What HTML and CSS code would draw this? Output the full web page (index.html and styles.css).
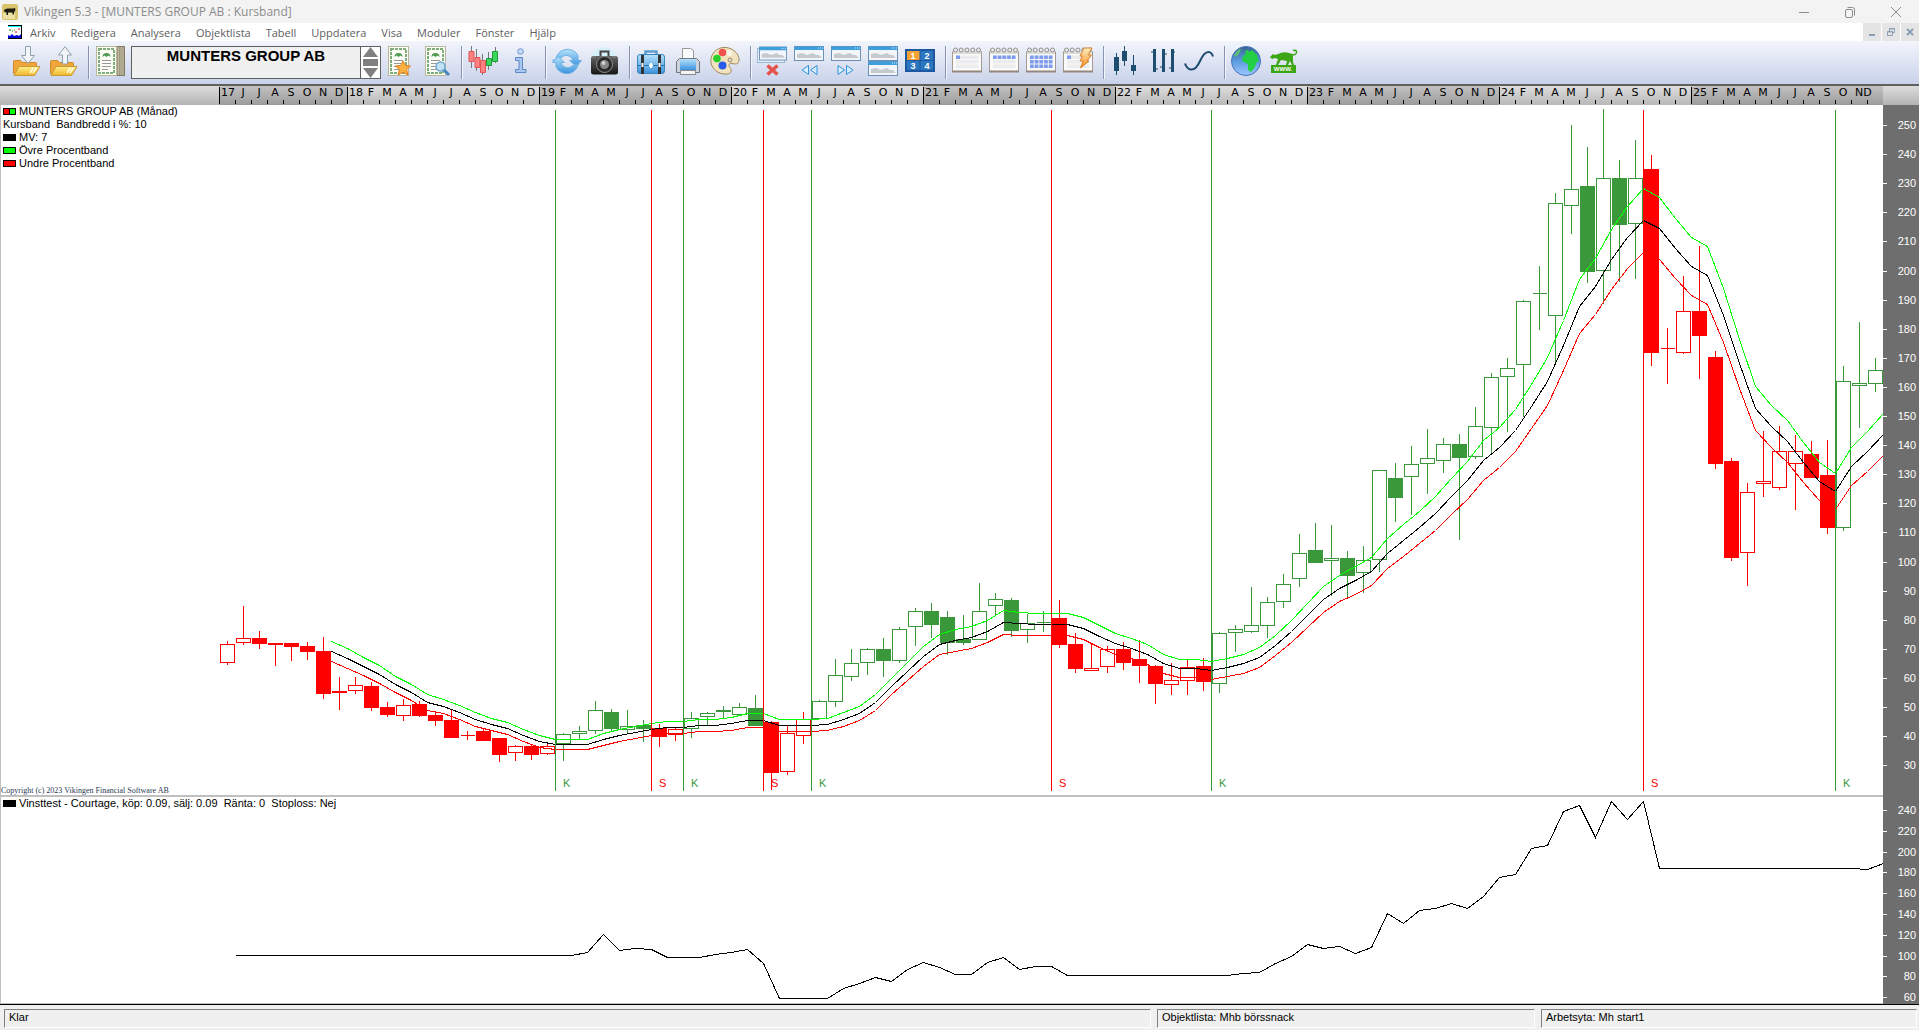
FILE: index.html
```
<!DOCTYPE html>
<html lang="sv">
<head>
    <meta charset="UTF-8">
    <meta name="viewport" content="width=device-width, initial-scale=1.0">
    <title>Vikingen 5.3 - [MUNTERS GROUP AB : Kursband]</title>
    <link rel="stylesheet" href="styles.css">
</head>
<body>
    <svg class="defs" width="0" height="0" aria-hidden="true">
        <defs>
            <linearGradient id="gold" x1="0" y1="0" x2="0" y2="1"><stop offset="0" stop-color="#fff08a"/><stop offset="1" stop-color="#f0b429"/></linearGradient>
            <linearGradient id="blue" x1="0" y1="0" x2="0" y2="1"><stop offset="0" stop-color="#b5e2fb"/><stop offset="1" stop-color="#3c93dd"/></linearGradient>
            <linearGradient id="dark" x1="0" y1="0" x2="0" y2="1"><stop offset="0" stop-color="#666"/><stop offset="1" stop-color="#151515"/></linearGradient>
            <linearGradient id="globe" x1="0" y1="0" x2="0" y2="1"><stop offset="0" stop-color="#35648f"/><stop offset="0.5" stop-color="#5b9be0"/><stop offset="1" stop-color="#9cc8ff"/></linearGradient>
            <linearGradient id="bolt" x1="0" y1="0" x2="0" y2="1"><stop offset="0" stop-color="#fff0c0"/><stop offset="1" stop-color="#f58a1f"/></linearGradient>
        </defs>
        <symbol id="folder" viewBox="0 0 30 30">
            <path d="M2.500 28V15.500q0-1 1-1h6l2 2h13q1 0 1 1V21" fill="#f0a638" stroke="#d08a2c"/>
            <path d="M3 29.500L8 20.500H29L23.500 29.500Z" fill="url(#gold)" stroke="#c79a3a"/>
            <path d="M19 27l3.500-5.500M22 27l3.500-5.500" stroke="#fffbe0" stroke-width="1.500"/>
        </symbol>
        <symbol id="paper" viewBox="0 0 30 30">
            <rect x="1.500" y="0.500" width="20" height="29" fill="#fdfdf8" stroke="#b9b79a"/>
            <rect x="4" y="3" width="15" height="24" fill="none" stroke="#7fae7b" stroke-width="2" stroke-dasharray="3 1"/>
            <path d="M7.500 11q0-4 4-4t4 4l-2-1.500-2 1.500-2-1.500z" fill="#4f9a52"/>
            <path d="M7 14.500h9M7 17.500h9M7 20.500h9M7 23.500h6" stroke="#999"/>
        </symbol>
        <symbol id="window" viewBox="0 0 30 15">
            <rect x="0.500" y="0.500" width="29" height="14" fill="#f2f5fa" stroke="#6d8fb5"/>
            <rect x="0.500" y="0.500" width="29" height="3.500" fill="#3f9fdc"/>
            <path d="M24 2h1M26 2h1M28 2h1" stroke="#cfeaff"/>
            <path d="M3 12V8l5-1 5 2 6-2 3 2h3l3 3z" fill="#c6c9ce"/>
        </symbol>
        <symbol id="calendar" viewBox="0 0 30 30">
            <path d="M0.500 5.500h29v20h-29z" fill="#fafafa" stroke="#a69a90"/>
            <path d="M0 25.500h30" stroke="#95877b" stroke-width="2"/>
            <path d="M1 6.500h28" stroke="#dcdcd8" stroke-width="3"/>
            <path d="M4 9.500h22.500v3.500H4zM4 14h22.500v3.500H4zM4 18.500h22.500V22H4z" fill="#ececee"/>
            <g fill="#eee" stroke="#8c8c8c"><circle cx="3.500" cy="4" r="2"/><circle cx="9.200" cy="4" r="2"/><circle cx="15" cy="4" r="2"/><circle cx="20.800" cy="4" r="2"/><circle cx="26.500" cy="4" r="2"/></g>
        </symbol>
    </svg>

    <header class="titlebar">
        <svg class="app-icon" width="16" height="16" viewBox="0 0 16 16"><rect width="16" height="16" rx="2" fill="#d9c56b"/><rect x="1" y="9" width="12" height="6" fill="#ece0a4"/><path d="M2 6q1-1.500 4-1.500h5l2-.500.500 2-1.500 2.500v2h-1.500V8.500H6V11H4.500V8.500L2.500 8z" fill="#1d1a12"/></svg>
        <h1>Vikingen 5.3 - [MUNTERS GROUP AB : Kursband]</h1>
        <div class="window-buttons">
            <button type="button" aria-label="Minimera"><svg width="12" height="12" viewBox="0 0 12 12"><path d="M1 6.500h10"/></svg></button>
            <button type="button" aria-label="Återställ"><svg width="12" height="12" viewBox="0 0 12 12"><rect x="1.500" y="3.500" width="7" height="8" rx="1.500"/><path d="M3.500 1.500h5q2 0 2 2v6"/></svg></button>
            <button type="button" aria-label="Stäng"><svg width="12" height="12" viewBox="0 0 12 12"><path d="M1 1l10 10M11 1L1 11"/></svg></button>
        </div>
    </header>

    <nav class="menubar">
        <svg class="doc-icon" width="14" height="14" viewBox="0 0 14 14"><rect width="14" height="14" fill="#000"/><rect x="0" y="1" width="13" height="12" fill="#fff"/><path d="M0 1.500h13" stroke="#0ff"/><path d="M0 13v-3l2 1 2-2 2 2 3-1 2 1 2-2v4z" fill="#0000d8"/><path d="M1 5h2M4 6h1M6 5h1" stroke="#080"/><path d="M7 7h2M10 4h2" stroke="#c00"/></svg>
        <a href="#">Arkiv</a>
        <a href="#">Redigera</a>
        <a href="#">Analysera</a>
        <a href="#">Objektlista</a>
        <a href="#">Tabell</a>
        <a href="#">Uppdatera</a>
        <a href="#">Visa</a>
        <a href="#">Moduler</a>
        <a href="#">Fönster</a>
        <a href="#">Hjälp</a>
        <div class="mdi-buttons">
            <button type="button" aria-label="Minimera fönster"><svg width="8" height="8" viewBox="0 0 8 8"><path d="M1 7h6" stroke-width="2"/></svg></button>
            <button type="button" aria-label="Återställ fönster"><svg width="8" height="8" viewBox="0 0 8 8"><path d="M0.500 3.500h5v4h-5zM2.500 3V0.500h5v4H6M0.500 4h5M2.500 1h5"/></svg></button>
            <button type="button" aria-label="Stäng fönster"><svg width="8" height="8" viewBox="0 0 8 8"><path d="M1 1l6 6M7 1L1 7" stroke-width="2"/></svg></button>
        </div>
    </nav>

    <div class="toolbar">
        <div class="group">
            <button type="button" aria-label="Öppna"><svg viewBox="0 0 30 30"><use href="#folder"/><path d="M14.500 0.500h5v9h4l-6.500 8-6.500-8h4z" fill="#f1f5f8" stroke="#8fa0ad"/></svg></button>
            <button type="button" aria-label="Spara"><svg viewBox="0 0 30 30"><use href="#folder"/><path d="M14.500 18h5V9h4L17 0.700 10.500 9h4z" fill="#f1f5f8" stroke="#8fa0ad"/></svg></button>
        </div>
        <div class="group">
            <button type="button" aria-label="Objekt"><svg viewBox="0 0 30 30"><path d="M21 0.500h8.500v29H21z" fill="#a09a80" stroke="#807a63"/><path d="M23.500 1v28M26 1v28M28 1v28" stroke="#c0b9a0"/><use href="#paper"/></svg></button>
            <div class="instrument">
                <input type="text" aria-label="Objektnamn" value="MUNTERS GROUP AB" readonly>
                <div class="spinner">
                    <button type="button" aria-label="Föregående"><svg width="17" height="10" viewBox="0 0 17 10"><path d="M1 10L8.500 0 16 10z"/></svg></button>
                    <button type="button" aria-label="Välj"><svg width="17" height="7" viewBox="0 0 17 7"><path d="M1 0h15v7H1z"/></svg></button>
                    <button type="button" aria-label="Nästa"><svg width="17" height="10" viewBox="0 0 17 10"><path d="M1 0h15L8.500 10z"/></svg></button>
                </div>
            </div>
            <button type="button" aria-label="Favoriter"><svg viewBox="0 0 30 30"><use href="#paper" x="3" width="30" height="30"/><path d="M19 15l2.300 4.500 5.200.500-3.800 3.600 1.200 5.400-4.900-2.700-4.900 2.700 1.200-5.400-3.800-3.600 5.200-.500z" fill="#fbb040" stroke="#e07d1e"/></svg></button>
            <button type="button" aria-label="Sök"><svg viewBox="0 0 30 30"><use href="#paper" x="3" width="30" height="30"/><path d="M22 23l6 6" stroke="#4688bd" stroke-width="3"/><circle cx="19.500" cy="20.500" r="4.500" fill="#c3e2f6" stroke="#6fa9d6" stroke-width="1.500"/></svg></button>
        </div>
        <div class="group">
            <button type="button" aria-label="Diagram"><svg viewBox="0 0 30 30"><path d="M3.500 0v22M8.500 3v22M14.500 8v21M20.500 6v18M27.500 1v16" stroke="#777"/><g fill="#ff8080" stroke="#e05555"><path d="M1 5.500h5v10H1zM7 11.500h5v10H7zM12.500 14.500h5v12h-5z"/></g><g fill="#3ad85a" stroke="#239a3a"><path d="M18.500 12.500h5v7h-5zM24.500 5.500h5v10h-5z"/></g></svg></button>
            <button type="button" aria-label="Information"><svg viewBox="0 0 30 30"><circle cx="15.500" cy="5.500" r="2.800" fill="#c7dcf7" stroke="#6d96cf"/><path d="M10.500 11.500h7v12h3.500v3H10.500v-3H14v-9h-3.500z" fill="#a9c8f0" stroke="#5e89c6"/></svg></button>
        </div>
        <div class="group">
            <button type="button" aria-label="Uppdatera"><svg viewBox="0 0 30 30"><path d="M0.500 14.500L3.500 14.500A12 12 0 0 1 26 9.500V14.500H29.500L24.500 20.500 17.500 14.500H21A6.800 6.800 0 0 0 9 12z" fill="url(#blue)" stroke="#6fb2e4"/><path d="M26.500 18A12 12 0 0 1 4 21V16.500H0.500L6 10.500 12.500 16.500H9A6.800 6.800 0 0 0 20 20z" fill="url(#blue)" stroke="#6fb2e4"/></svg></button>
            <button type="button" aria-label="Kamera"><svg viewBox="0 0 30 30"><circle cx="15" cy="15" r="13.500" fill="#d5f0fb"/><path d="M11.500 10V5.500h8V10" fill="none" stroke="#444" stroke-width="2"/><rect x="2" y="10" width="27" height="18.500" rx="2.500" fill="url(#dark)"/><path d="M3 11h4M23 11h4" stroke="#777" stroke-width="2"/><circle cx="15.500" cy="18.500" r="8" fill="#2b2b2b" stroke="#8d8d8d"/><circle cx="15.500" cy="18.500" r="4.500" fill="#888"/><circle cx="14.500" cy="17" r="2" fill="#d0d0d0"/></svg></button>
        </div>
        <div class="group">
            <button type="button" aria-label="Verktyg"><svg viewBox="0 0 30 30"><path d="M9.500 9V5.500h11V9" fill="none" stroke="#5d9ecf" stroke-width="2.500"/><rect x="1.500" y="8.500" width="27" height="19" rx="2.500" fill="url(#blue)" stroke="#3d86bd"/><path d="M1 19.500h28" stroke="#2d73ab"/><path d="M6.500 9v19M23.500 9v19" stroke="#333" stroke-width="3"/><path d="M6.500 17v4M23.500 17v4M15 17v5M13 19.500h4" stroke="#fff" stroke-width="2"/></svg></button>
            <button type="button" aria-label="Skriv ut"><svg viewBox="0 0 30 30"><path d="M9.500 13V2.500h8l3 2V13" fill="#fafbfc" stroke="#999"/><path d="M6.500 12.500h17l3 3v11h-23v-11z" fill="#cfd4dc" stroke="#70757f"/><rect x="7" y="13" width="16" height="11" fill="url(#blue)"/><path d="M7.500 24.500h15v4h-15z" fill="#f5f5f5" stroke="#888"/></svg></button>
            <button type="button" aria-label="Färger"><svg viewBox="0 0 30 30"><path d="M13 1.500C21 .500 29.500 7 29 14c-.500 5-4 4-7 3.500s-4 2-2 4 2 6-3 6.500C8 29 .500 22 .800 14.500S7 2 13 1.500z" fill="#f0e3bd" stroke="#a08a5e"/><circle cx="20" cy="14" r="2" fill="#dde" stroke="#a08a5e"/><circle cx="12.500" cy="6.500" r="3.800" fill="#f0504c"/><circle cx="7" cy="12.500" r="3.800" fill="#28cf28"/><circle cx="12.500" cy="19.500" r="4" fill="#2a5ae8"/><circle cx="19.500" cy="7" r="3" fill="#f7f3e6"/></svg></button>
        </div>
        <div class="group">
            <button type="button" aria-label="Stäng alla"><svg viewBox="0 0 30 30"><rect x="0.500" y="2.500" width="27" height="14" fill="#e6eef8" stroke="#9bb8d6"/><use href="#window" x="2" y="0" width="28" height="15"/><path d="M10.500 19.500l10 9M20.500 19.500l-10 9" stroke="#e5534d" stroke-width="3.500"/></svg></button>
            <button type="button" aria-label="Föregående fönster"><svg viewBox="0 0 30 30"><use href="#window" width="30" height="15"/><path d="M14.500 19.500v9L8 24zM23 19.500v9L16.500 24z" fill="#d6efff" stroke="#3291dc"/></svg></button>
            <button type="button" aria-label="Nästa fönster"><svg viewBox="0 0 30 30"><use href="#window" width="30" height="15"/><path d="M7 19.500v9l6.500-4.500zM15.500 19.500v9L22 24z" fill="#d6efff" stroke="#3291dc"/></svg></button>
            <button type="button" aria-label="Dela fönster"><svg viewBox="0 0 30 30"><use href="#window" width="30" height="15"/><use href="#window" y="15" width="30" height="15"/></svg></button>
            <button type="button" aria-label="Arbetsytor"><svg viewBox="0 0 30 30"><rect y="3" width="30" height="23" fill="#1c57a0"/><rect x="2" y="5" width="12.500" height="9" fill="#f5a235"/><path d="M15.500 5H28v9H15.500zM2 15h12.500v9H2zM15.500 15H28v9H15.500z" fill="#2b76bf"/><g class="cells"><text x="8" y="13">1</text><text x="22" y="13">2</text><text x="8" y="23">3</text><text x="22" y="23">4</text></g></svg></button>
        </div>
        <div class="group">
            <button type="button" aria-label="Dag"><svg viewBox="0 0 30 30"><use href="#calendar"/><path d="M4 9.500h4v3.500H4z" fill="#7d9cf0"/></svg></button>
            <button type="button" aria-label="Vecka"><svg viewBox="0 0 30 30"><use href="#calendar"/><path d="M4 11.300h22.500" stroke="#7d9cf0" stroke-width="3.500" stroke-dasharray="3.700 1"/></svg></button>
            <button type="button" aria-label="Månad"><svg viewBox="0 0 30 30"><use href="#calendar"/><path d="M4 11.300h22.500M4 15.800h22.500M4 20.300h22.500" stroke="#7d9cf0" stroke-width="3.500" stroke-dasharray="3.700 1"/></svg></button>
            <button type="button" aria-label="Realtid"><svg viewBox="0 0 30 30"><use href="#calendar"/><path d="M4 9.500h4v3.500H4z" fill="#7d9cf0"/><path d="M21 2h8l-4 7h3.500l-4.500 6h2L17.500 22l2.500-7h-3l2.500-5H17z" fill="url(#bolt)" stroke="#d9822b"/></svg></button>
        </div>
        <div class="group">
            <button type="button" aria-label="Candlestick"><svg viewBox="0 0 30 30"><path d="M6.500 7v22M14.500 0v20M23.500 9v20" stroke="#1d4e70"/><path d="M4 11h5v14H4zM12 5h5v10h-5zM21 19h5v6h-5z" fill="#1d4e70"/></svg></button>
            <button type="button" aria-label="Staplar"><svg viewBox="0 0 30 30"><path d="M7.500 3v23M16.500 3v23M25.500 3v23" stroke="#1d4e70" stroke-width="3"/><path d="M4 6h3M8 23h3M13 21h3M17 8h3M22 22h3M26 6h2" stroke="#1d4e70"/></svg></button>
            <button type="button" aria-label="Linje"><svg viewBox="0 0 30 30"><path d="M1 17.500c2 6 7 8 11 4s5-11 9-14 7-1 8 3" fill="none" stroke="#1d4e70" stroke-width="2"/></svg></button>
        </div>
        <div class="group">
            <button type="button" aria-label="Internet"><svg viewBox="0 0 30 30"><circle cx="15" cy="15" r="14.500" fill="url(#globe)" stroke="#4573b8"/><path d="M12 10l3-2-1-3 3-1 1 2 3-2 5 5 2 6-3 2-1 4-4 5-3-2v-6l-6-3z" fill="#23d043"/><path d="M3 9l4-5 3-1-2 5-4 3z" fill="#5fbf78"/></svg></button>
            <button type="button" aria-label="Hemsida"><svg viewBox="0 0 30 30"><path d="M2 11l3-3 2 1 3-1q6-3 11-1l3 1q1 1 1 3v5l1 3h-2l-2-4-2 4h-2l1-4-6-1-3 5H8l2-6-3-1-3 1z" fill="#3da614"/><path d="M23 8.500q5 1 5.500-2T25 4.500" fill="none" stroke="#3da614" stroke-width="1.500"/><rect x="3" y="19" width="25" height="8" fill="#3da614"/><text class="www" x="15" y="25">WWW.</text></svg></button>
        </div>
    </div>

    <div class="timeline" id="timeline"></div>
    <main class="charts">
        <section class="chart price">
            <svg class="plot" id="price-plot" role="img" aria-label="Kursdiagram"></svg>
            <svg class="scale" id="price-scale"></svg>
            <ul class="legend">
                <li><i class="swatch both"></i>MUNTERS GROUP AB (Månad)</li>
                <li class="plain">Kursband&nbsp; Bandbredd i %: 10</li>
                <li><i class="swatch black"></i>MV: 7</li>
                <li><i class="swatch green"></i>Övre Procentband</li>
                <li><i class="swatch red"></i>Undre Procentband</li>
            </ul>
            <small class="copyright">Copyright (c) 2023 Vikingen Financial Software AB</small>
        </section>
        <section class="chart profit">
            <svg class="plot" id="profit-plot" role="img" aria-label="Vinsttest"></svg>
            <svg class="scale" id="profit-scale"></svg>
            <ul class="legend">
                <li><i class="swatch black"></i>Vinsttest - Courtage, köp: 0.09, sälj: 0.09&nbsp; Ränta: 0&nbsp; Stoploss: Nej</li>
            </ul>
        </section>
    </main>

    <footer class="statusbar">
        <span>Klar</span>
        <span>Objektlista: Mhb börssnack</span>
        <span>Arbetsyta: Mh start1</span>
    </footer>
    <script src="chart.js"></script>
</body>
</html>
```

FILE: styles.css
```
* {
    box-sizing: border-box;
}

body {
    margin: 0;
    height: 100vh;
    display: flex;
    flex-direction: column;
    overflow: hidden;
    background-color: #f0f0f0;
    color: #000;
    font-family: "Liberation Sans", Arial, sans-serif;
    font-size: 11px;
}

button {
    padding: 0;
    border: none;
    background: none;
}

.defs {
    position: absolute;
}

/* title and menu */

.titlebar {
    display: flex;
    align-items: center;
    gap: 6px;
    height: 23px;
    padding-left: 2px;
    background-color: #f3f3f3;
    font-family: "Open Sans", "Segoe UI", sans-serif;
}

.titlebar h1 {
    flex: 1;
    margin: 0;
    font-size: 12px;
    font-weight: 400;
    color: #8c8c8c;
}

.window-buttons {
    display: flex;
}

.window-buttons button {
    width: 46px;
    height: 20px;
}

.window-buttons svg,
.mdi-buttons svg {
    display: block;
    margin: auto;
    fill: none;
    stroke: #8c8c8c;
}

.menubar {
    display: flex;
    align-items: center;
    gap: 15px;
    height: 18px;
    padding-left: 8px;
    background-color: #fff;
    font-family: "Open Sans", "Segoe UI", sans-serif;
    font-size: 11px;
}

.menubar .doc-icon {
    margin-right: -7px;
}

.menubar a {
    color: #606060;
    text-decoration: none;
}

.mdi-buttons {
    display: flex;
    gap: 1px;
    margin-left: auto;
}

.mdi-buttons button {
    width: 18px;
    height: 18px;
    background-color: #e5e5e5;
}

.mdi-buttons svg {
    stroke: #8ba0b4;
}

/* toolbar */

.toolbar {
    display: flex;
    height: 45px;
    padding: 5px 0 0 5px;
    border-bottom: 2px solid #606060;
    background: linear-gradient(#f2f5fb, #c9d2ea);
}

.group {
    display: flex;
    gap: 7px;
    padding: 0 10px 0 6px;
}

.group + .group {
    height: 33px;
    border-left: 1px solid #8894b4;
    box-shadow: inset 1px 0 #f4f6fc;
}

.group > button {
    width: 30px;
    height: 30px;
}

.group > button svg {
    display: block;
    width: 30px;
    height: 30px;
}

.instrument {
    display: flex;
    width: 250px;
    height: 33px;
    margin: 0 -4px 0 -1px;
    border: 1px solid #606060;
    background-color: #fff;
}

.instrument input {
    flex: 1;
    min-width: 0;
    height: 31px;
    padding: 0 0 14px;
    border: none;
    border-right: 1px solid #606060;
    background-color: #f0f0f0;
    color: #000;
    font-family: "Liberation Sans", Arial, sans-serif;
    font-size: 15px;
    font-weight: 700;
    text-align: center;
}

.spinner {
    display: flex;
    flex-direction: column;
    justify-content: space-between;
    width: 19px;
}

.spinner svg {
    display: block;
    margin: auto;
    fill: #808080;
}

.cells text {
    font-size: 9px;
    font-weight: 700;
    fill: #fff;
    text-anchor: middle;
}

.www {
    font-size: 6px;
    font-weight: 700;
    fill: #fff;
    text-anchor: middle;
}

/* time axis */

.timeline {
    display: flex;
    height: 19px;
    padding-left: 219px;
    background: linear-gradient(#dcdcdc, #b4b4b4);
    font-family: "DejaVu Sans", Verdana, sans-serif;
    overflow: hidden;
}

.timeline .year {
    display: flex;
    height: 19px;
    background: linear-gradient(#dedede, #b8b8b8);
}

.timeline .year:nth-child(odd) {
    background: linear-gradient(#c2c2c2, #9c9c9c);
}

.timeline span {
    position: relative;
    width: 16px;
    line-height: 13px;
    text-align: center;
}

.timeline span::before {
    content: "";
    position: absolute;
    left: 0;
    bottom: 1px;
    width: 1px;
    height: 4px;
    background-color: #000;
}

.timeline span:first-child {
    padding-left: 2px;
    text-align: left;
}

.timeline span:first-child::before {
    height: 17px;
}

.timeline .pair {
    padding-left: 4px;
    text-align: left;
}

/* charts */

.charts {
    flex: 1;
    display: flex;
    flex-direction: column;
    min-height: 0;
    border-bottom: 1px solid #000;
}

.chart {
    position: relative;
    display: flex;
    min-height: 0;
    background-color: #fff;
}

.price {
    flex: 1;
}

.profit {
    height: 207px;
}

.plot {
    flex: 1;
    min-width: 0;
    height: 100%;
    border-left: 1px solid #c0c0c0;
}

.price .plot {
    border-bottom: 2px solid #c0c0c0;
}

.profit .plot {
    border-bottom: 1px solid #c0c0c0;
}

.scale {
    width: 36px;
    height: 100%;
    background-color: #6e6e6e;
}

.scale path {
    stroke: #fff;
}

.scale text {
    fill: #fff;
    text-anchor: end;
}

.plot path {
    fill: none;
    shape-rendering: crispEdges;
}

.plot .up {
    stroke: #3a983a;
    fill: none;
}

.plot .up.full {
    fill: #3a983a;
}

.plot .down {
    stroke: #f00;
}

.plot .down.full {
    fill: #f00;
}

.plot .upper {
    stroke: #0f0;
}

.plot .mean {
    stroke: #000;
}

.plot .lower {
    stroke: #f00;
}

.plot .buy {
    fill: #3a983a;
}

.plot .sell {
    fill: #f00;
}

.legend {
    position: absolute;
    top: 0;
    left: 3px;
    margin: 0;
    padding: 0;
    list-style: none;
    line-height: 13px;
}

.legend li {
    display: flex;
    align-items: center;
    gap: 3px;
    white-space: nowrap;
}

.swatch {
    width: 13px;
    height: 7px;
    border: 1px solid #000;
}

.swatch.black {
    background-color: #000;
}

.swatch.green {
    background-color: #0f0;
}

.swatch.red {
    background-color: #f00;
}

.swatch.both {
    background: linear-gradient(90deg, #f00 5px, #000 5px, #000 6px, #0f0 6px);
}

.copyright {
    position: absolute;
    left: 1px;
    bottom: 2px;
    color: #2b3a55;
    font-family: "Liberation Serif", "Times New Roman", serif;
    font-size: 8px;
    line-height: 9px;
}

/* status bar */

.statusbar {
    display: grid;
    grid-template-columns: 1fr 378px 376px;
    gap: 6px;
    height: 25px;
    padding: 4px 2px 2px 4px;
}

.statusbar span {
    padding-left: 4px;
    border: 1px solid #fff;
    border-top-color: #808080;
    border-left-color: #808080;
    line-height: 15px;
}
```

FILE: chart.js
```
// one column per month, first column starts at START
const START = 218;
const STEP = 16;
const TOP = 105;

// [kind, high, body top, body bottom, low] in pixel rows, upper case = filled
const candles = [
    ["r", 641, 644, 662, 664], ["r", 606, 638, 642, 644], ["R", 631, 638, 643, 648], ["R", 643, 643, 644, 665],
    ["R", 643, 643, 646, 660], ["R", 642, 646, 651, 659], ["R", 637, 651, 693, 698], ["R", 677, 691, 692, 709],
    ["r", 677, 685, 690, 693], ["R", 682, 686, 707, 710], ["R", 702, 707, 714, 716], ["r", 699, 705, 715, 720],
    ["R", 701, 704, 715, 716], ["R", 712, 715, 720, 725], ["R", 709, 720, 737, 737], ["R", 731, 735, 735, 739],
    ["R", 728, 731, 740, 740], ["R", 738, 738, 754, 761], ["r", 745, 746, 752, 760], ["R", 744, 746, 754, 759],
    ["r", 743, 746, 753, 754], ["g", 733, 734, 743, 760], ["g", 726, 731, 733, 739], ["g", 701, 710, 730, 733],
    ["G", 709, 712, 728, 730], ["g", 710, 726, 729, 733], ["G", 720, 725, 728, 741], ["R", 724, 728, 736, 746],
    ["r", 728, 729, 734, 740], ["g", 712, 718, 728, 737], ["g", 712, 713, 716, 724], ["G", 706, 710, 711, 717],
    ["g", 703, 707, 714, 714], ["G", 695, 708, 725, 725], ["R", 721, 722, 772, 789], ["r", 725, 733, 771, 774],
    ["r", 712, 719, 735, 743], ["g", 700, 701, 718, 718], ["g", 659, 675, 701, 706], ["g", 649, 663, 676, 680],
    ["g", 648, 649, 662, 674], ["G", 638, 649, 660, 676], ["g", 627, 629, 660, 662], ["g", 608, 611, 626, 645],
    ["G", 603, 611, 624, 637], ["G", 611, 617, 642, 654], ["G", 615, 639, 642, 644], ["g", 583, 611, 639, 639],
    ["g", 593, 599, 605, 615], ["G", 598, 600, 630, 636], ["g", 614, 623, 629, 642], ["G", 611, 622, 622, 631],
    ["R", 600, 618, 644, 647], ["R", 633, 644, 668, 672], ["r", 643, 668, 670, 670], ["r", 646, 649, 666, 672],
    ["R", 642, 649, 662, 669], ["R", 640, 659, 665, 682], ["R", 665, 666, 683, 703], ["r", 663, 680, 684, 694],
    ["r", 660, 667, 680, 694], ["R", 658, 666, 681, 690], ["g", 632, 633, 683, 692], ["g", 625, 629, 632, 651],
    ["g", 587, 625, 631, 632], ["g", 597, 602, 625, 637], ["g", 574, 584, 601, 607], ["g", 534, 553, 578, 586],
    ["G", 523, 550, 562, 562], ["g", 525, 558, 560, 595], ["G", 551, 558, 575, 597], ["g", 546, 560, 572, 592],
    ["g", 470, 470, 559, 571], ["G", 463, 478, 497, 521], ["g", 446, 464, 476, 514], ["g", 429, 458, 463, 493],
    ["g", 438, 444, 460, 472], ["G", 434, 444, 457, 539], ["g", 407, 426, 456, 458], ["g", 373, 377, 427, 452],
    ["g", 358, 368, 376, 431], ["g", 300, 301, 364, 416], ["G", 266, 293, 293, 329], ["g", 193, 203, 315, 361],
    ["g", 125, 189, 205, 233], ["G", 147, 186, 271, 282], ["g", 109, 178, 270, 303], ["G", 160, 178, 224, 281],
    ["g", 140, 178, 223, 278], ["R", 155, 169, 352, 365], ["R", 328, 348, 348, 383], ["r", 276, 311, 352, 353],
    ["R", 246, 311, 335, 378], ["R", 351, 357, 463, 468], ["R", 458, 461, 557, 560], ["r", 483, 492, 552, 585],
    ["r", 431, 481, 483, 496], ["r", 426, 451, 487, 489], ["r", 435, 451, 463, 509], ["R", 441, 454, 477, 477],
    ["R", 440, 475, 527, 533], ["g", 366, 381, 527, 530], ["g", 322, 383, 385, 427], ["g", 358, 370, 383, 391]
];

// moving average, starts after seven months
const mean = [
    651, 658, 666, 674, 684, 692, 702, 706, 712, 719, 724, 728, 735, 741, 744, 744, 744, 739, 735, 732,
    729, 727, 727, 725, 725, 723, 720, 720, 725, 725, 725, 724, 719, 713, 702, 686, 671, 656, 644, 640,
    637, 631, 622, 623, 624, 624, 624, 628, 636, 643, 648, 654, 663, 668, 668, 670, 667, 663, 657, 645,
    631, 615, 599, 588, 580, 571, 553, 540, 527, 513, 496, 480, 460, 447, 430, 406, 381, 345, 306, 286,
    259, 237, 220, 228, 248, 266, 275, 315, 363, 408, 426, 441, 462, 481, 491, 466, 451, 434
];

const profit = [
    ...Array(22).fill(955), 952, 934, 950, 948, 949, 957, 957, 957, 954, 952, 949, 963, 998, 998, 998, 998,
    988, 983, 977, 981, 969, 962, 967, 974, 974, 962, 957, 969, 966, 966, ...Array(11).fill(975),
    973, 972, 963, 956, 944, 948, 946, 953, 947, 913, 923, 910, 908, 903, 908, 896, 877, 874, 848, 845, 811,
    805, 837, 801, 819, 801, ...Array(13).fill(868), 869, 863
];

// buy (K) and sell (S) signals by column
const signals = [[21, "K"], [27, "S"], [29, "K"], [34, "S"], [37, "K"], [52, "S"], [62, "K"], [89, "S"], [101, "K"]];

function line(values, first, top, name) {
    const points = values.map((y, i) => (START + STEP * (first + i)) + ".5 " + (Math.round(y) - top) + ".5");
    return `<path class="${name}" d="M${points.join("L")}"/>`;
}

function drawPrice() {
    let out = "";
    candles.forEach(([kind, high, top, bottom, low], i) => {
        const x = START + STEP * i + 1;
        const full = kind === kind.toUpperCase() ? " full" : "";
        const name = kind.toLowerCase() === "g" ? "up" : "down";
        out += `<path class="${name}${full}" d="M${x + 7}.5 ${high - TOP}V${top - TOP}M${x + 7}.5 ${bottom - TOP}V${low - TOP + 1}M${x}.5 ${top - TOP}.5h14v${bottom - top}h-14z"/>`;
    });
    out += line(mean.map(y => y - (853 - y) * 0.05), 7, TOP, "upper");
    out += line(mean.map(y => y + (853 - y) * 0.05), 7, TOP, "lower");
    out += line(mean, 7, TOP, "mean");
    signals.forEach(([column, letter]) => {
        const x = START + STEP * column;
        const buy = letter === "K";
        out += `<path class="${buy ? "up" : "down"}" d="M${x}.5 5V686"/>`;
        out += `<text class="${buy ? "buy" : "sell"}" x="${x + 8}" y="682">${letter}</text>`;
    });
    document.getElementById("price-plot").innerHTML = out;
}

function drawScale(id, from, to, step, start, size) {
    let out = "";
    for (let value = from, i = 0; value >= to; value -= step, i++) {
        const y = Math.round(start + size * i);
        out += `<path d="M0 ${y}.5h4"/><text x="33" y="${y + 4}">${value}</text>`;
    }
    document.getElementById(id).innerHTML = out;
}

function drawTimeline() {
    const months = ["F", "M", "A", "M", "J", "J", "A", "S", "O", "N", "D"];
    let out = "";
    for (let year = 17; year <= 25; year++) {
        let names = year === 17 ? months.slice(4) : months;
        // the last column is cut off, so its letter sits beside the one before
        if (year === 25) names = [...months.slice(0, 9), "ND", ""];
        const cells = names.map(m => m === "ND" ? `<span class="pair">${m}</span>` : `<span>${m}</span>`);
        out += `<div class="year"><span>${year}</span>${cells.join("")}</div>`;
    }
    document.getElementById("timeline").innerHTML = out;
}

drawTimeline();
drawPrice();
drawScale("price-scale", 250, 30, 10, 20, 29.1);
document.getElementById("profit-plot").innerHTML = line(profit, 1, 797, "mean");
drawScale("profit-scale", 240, 60, 20, 13, 20.8);
```
